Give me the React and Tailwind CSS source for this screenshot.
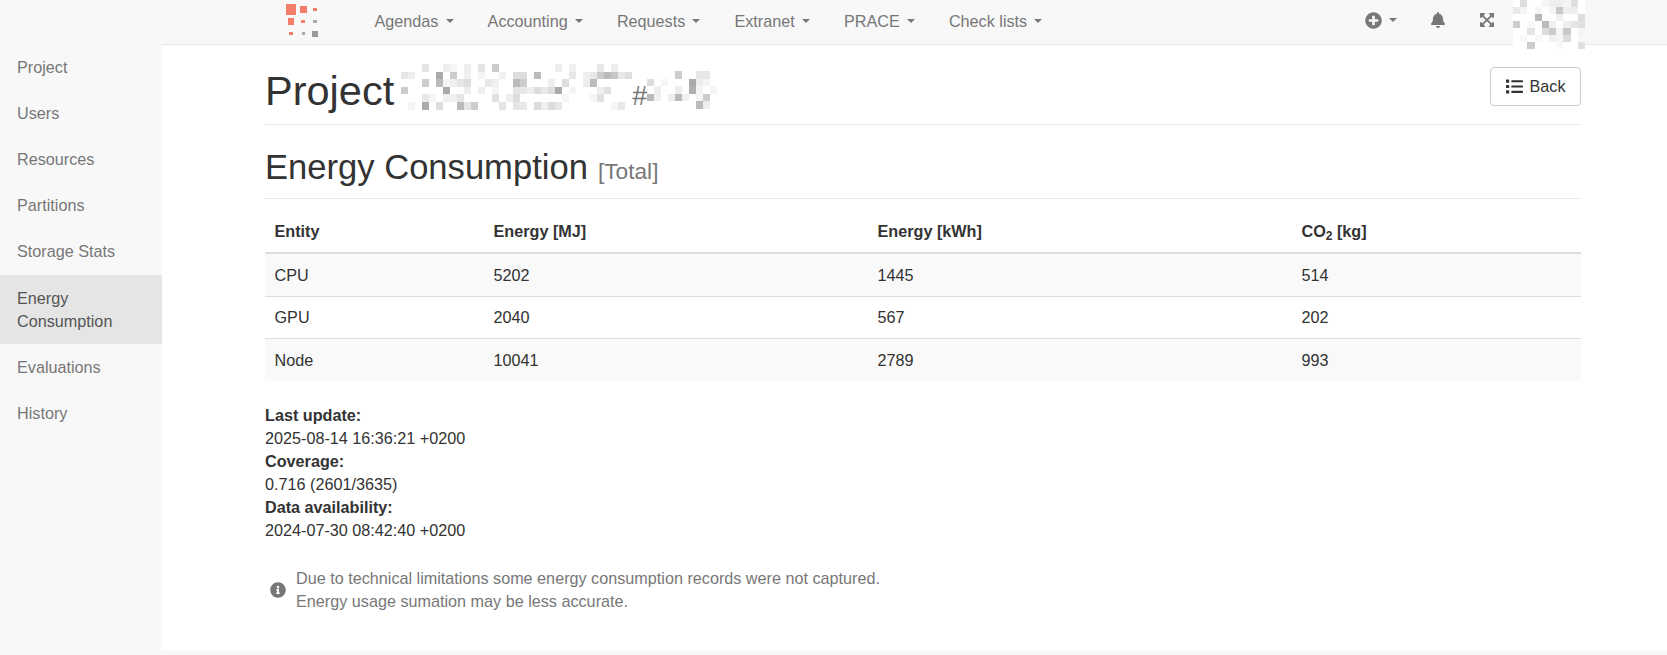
import { FaPlusCircle, FaBell, FaExpandArrowsAlt, FaList, FaInfoCircle } from "react-icons/fa";

const sideItems = ["Project", "Users", "Resources", "Partitions", "Storage Stats", "Energy Consumption", "Evaluations", "History"];
const navItems = ["Agendas", "Accounting", "Requests", "Extranet", "PRACE", "Check lists"];

const rows = [
  ["CPU", "5202", "1445", "514", "h-[43px] pt-px border-b border-[#ddd] bg-[#f9f9f9]"],
  ["GPU", "2040", "567", "202", "h-[42px] border-b border-[#ddd]"],
  ["Node", "10041", "2789", "993", "h-[42px] bg-[#f9f9f9]"],
];

// redacted text, [row, col, gray]
const nameCells = [
  [0,3,"#e5e5e5"],[0,6,"#eee"],[0,7,"#f5f5f5"],[0,9,"#eee"],[0,11,"#e5e5e5"],[0,13,"#ccc"],[0,22,"#eee"],[0,24,"#f0f0f0"],[0,28,"#e8e8e8"],[0,30,"#eee"],
  [1,0,"#e5e5e5"],[1,1,"#eee"],[1,5,"#aaa"],[1,7,"#ccc"],[1,9,"#f0f0f0"],[1,11,"#f5f5f5"],[1,14,"#f0f0f0"],[1,16,"#ddd"],[1,17,"#ddd"],[1,19,"#bbb"],[1,24,"#e8e8e8"],[1,26,"#f0f0f0"],[1,27,"#e8e8e8"],[1,28,"#ccc"],[1,29,"#bbb"],[1,30,"#c8c8c8"],[1,31,"#e8e8e8"],[1,32,"#e0e0e0"],
  [2,3,"#ccc"],[2,5,"#bbb"],[2,6,"#f5f5f5"],[2,7,"#f0f0f0"],[2,8,"#e5e5e5"],[2,9,"#ddd"],[2,12,"#e8e8e8"],[2,13,"#f0f0f0"],[2,16,"#bbb"],[2,17,"#ccc"],[2,21,"#eee"],[2,23,"#ddd"],[2,26,"#eee"],[2,27,"#bbb"],
  [3,0,"#ccc"],[3,6,"#aaa"],[3,9,"#eee"],[3,11,"#eee"],[3,13,"#f5f5f5"],[3,16,"#e5e5e5"],[3,17,"#e8e8e8"],[3,18,"#eee"],[3,19,"#ddd"],[3,20,"#e8e8e8"],[3,21,"#ddd"],[3,22,"#aaa"],[3,24,"#f5f5f5"],[3,28,"#eee"],[3,29,"#e0e0e0"],
  [4,3,"#e8e8e8"],[4,4,"#f5f5f5"],[4,6,"#f0f0f0"],[4,7,"#f0f0f0"],[4,8,"#e5e5e5"],[4,13,"#e0e0e0"],[4,15,"#eee"],[4,16,"#ddd"],[4,23,"#f5f5f5"],[4,27,"#f5f5f5"],[4,28,"#e0e0e0"],
  [5,1,"#f5f5f5"],[5,3,"#aaa"],[5,5,"#ddd"],[5,8,"#bbb"],[5,9,"#e5e5e5"],[5,10,"#ccc"],[5,14,"#e5e5e5"],[5,16,"#e5e5e5"],[5,17,"#e8e8e8"],[5,19,"#ddd"],[5,20,"#f0f0f0"],[5,21,"#ddd"],[5,22,"#e8e8e8"],[5,30,"#f5f5f5"],[5,31,"#e8e8e8"],
];
const idCells = [
  [0,4,"#ccc"],[0,7,"#e8e8e8"],[0,8,"#e8e8e8"],
  [1,0,"#ddd"],[1,2,"#f5f5f5"],[1,6,"#aaa"],[1,7,"#eee"],[1,8,"#f5f5f5"],
  [2,1,"#eee"],[2,4,"#eee"],[2,6,"#b0b0b0"],[2,7,"#f5f5f5"],[2,9,"#f5f5f5"],
  [3,0,"#bbb"],[3,1,"#f0f0f0"],[3,3,"#eee"],[3,4,"#bbb"],[3,5,"#f0f0f0"],[3,7,"#f5f5f5"],[3,8,"#ccc"],
  [4,7,"#bbb"],[4,8,"#eee"],
];
const avatarCells = [
  [0,1,"#ddd"],[0,4,"#f5f5f5"],[0,5,"#eee"],[0,6,"#eee"],[0,7,"#f5f5f5"],[0,8,"#e0e0e0"],
  [1,0,"#e8e8e8"],[1,1,"#f5f5f5"],[1,3,"#f5f5f5"],[1,5,"#f5f5f5"],[1,6,"#c8c8c8"],[1,7,"#eee"],[1,8,"#eee"],
  [2,3,"#b8b8b8"],[2,6,"#f0f0f0"],[2,9,"#ddd"],
  [3,0,"#ccc"],[3,2,"#f8f8f8"],[3,4,"#bbb"],[3,5,"#f0f0f0"],[3,7,"#eee"],[3,8,"#e5e5e5"],[3,9,"#e0e0e0"],
  [4,2,"#e5e5e5"],[4,4,"#ddd"],[4,5,"#ccc"],[4,6,"#f5f5f5"],[4,7,"#c8c8c8"],[4,9,"#f5f5f5"],
  [5,1,"#f8f8f8"],[5,3,"#f8f8f8"],[5,5,"#f0f0f0"],[5,6,"#f5f5f5"],[5,7,"#ddd"],[5,9,"#f8f8f8"],
  [6,2,"#ccc"],[6,6,"#f8f8f8"],[6,9,"#e0e0e0"],
];

function Pixels({ cells, cols, rowCount, cw, ch, className }) {
  return (
    <svg className={className} width={cols * cw} height={rowCount * ch} viewBox={`0 0 ${cols * cw} ${rowCount * ch}`} shapeRendering="crispEdges">
      {cells.map(([r, c, fill]) => (
        <rect key={`${r}-${c}`} x={c * cw} y={r * ch} width={cw} height={ch} fill={fill} />
      ))}
    </svg>
  );
}

function Logo() {
  return (
    <svg className="mt-1 shrink-0" width="33" height="33" viewBox="0 0 33 33" shapeRendering="crispEdges">
      <rect x="0" y="0" width="10" height="11" fill="#f47c6b" />
      <rect x="14" y="2" width="7" height="7" fill="#f47c6b" />
      <rect x="27" y="4" width="4" height="3" fill="#f47c6b" />
      <rect x="2" y="14" width="6" height="7" fill="#f47c6b" />
      <rect x="15" y="16" width="4" height="3" fill="#f47c6b" />
      <rect x="27" y="16" width="4" height="3" fill="#aaa" />
      <rect x="3" y="28" width="4" height="3" fill="#f47c6b" />
      <rect x="16" y="28" width="3" height="3" fill="#aaa" />
      <rect x="26" y="27" width="6" height="6" fill="#999" />
    </svg>
  );
}

function Caret() {
  return <span className="inline-block w-0 h-0 border-x-4 border-t-4 border-x-transparent border-t-[#777]" />;
}

function App() {
  return (
    <div className="h-[655px] overflow-hidden bg-[#f8f8f8] font-['Liberation_Sans',sans-serif] text-[16.2px] leading-[23px] text-[#333]">

      {/* TOP NAV */}
      <div className="h-[44px] flex items-start pl-[286px] pr-[82px] bg-[#f8f8f8] text-[#777]">
        <Logo />
        <div className="flex ml-[38.5px]">
          {navItems.map((item) => (
            <div key={item} className="h-[42px] px-[17px] flex items-center gap-[7.2px]">
              {item}
              <Caret />
            </div>
          ))}
        </div>
        <div className="ml-auto flex items-start relative z-10">
          <div className="h-[40px] flex items-center gap-[7px] text-[#777]">
            <FaPlusCircle className="text-[17px]" />
            <Caret />
          </div>
          <div className="h-[40px] flex items-center ml-[33px]">
            <FaBell className="text-[16px]" />
          </div>
          <div className="h-[40px] flex items-center ml-[33px]">
            <FaExpandArrowsAlt className="text-[16px]" />
          </div>
          <Pixels className="ml-[18px] bg-white" cells={avatarCells} cols={10} rowCount={7} cw={7.2} ch={7} />
        </div>
      </div>

      <div className="flex">

        {/* SIDEBAR */}
        <div className="w-[162px] shrink-0 text-[#777]">
          {sideItems.map((item) => (
            <div
              key={item}
              className={item === "Energy Consumption" ? "px-[17px] py-[11.6px] bg-[#e5e5e5] text-[#555]" : "px-[17px] py-[11.6px]"}
            >
              {item}
            </div>
          ))}
        </div>

        {/* MAIN */}
        <div className="flex-1 h-[606px] bg-white border-t border-[#e7e7e7] pl-[103px] pr-[86px]">

          <div className="h-[80px] flex items-start justify-between border-b border-[#e7e7e7]">
            <div className="flex items-start">
              <h1 className="text-[41.5px] leading-[45px] mt-[23px]">Project</h1>
              <Pixels className="ml-[7px] mt-[19px]" cells={nameCells} cols={33} rowCount={6} cw={7} ch={7.6} />
              <span className="text-[27px] leading-[30px] text-[#777] mt-[36px]">#</span>
              <Pixels className="mt-[26px]" cells={idCells} cols={10} rowCount={5} cw={7} ch={7.6} />
            </div>
            <button className="mt-[22px] w-[91px] h-[39px] flex items-center justify-center gap-[7px] bg-white border border-[#ccc] rounded text-[#333]">
              <FaList className="text-[17px]" />
              Back
            </button>
          </div>

          <div className="h-[74px] flex items-baseline gap-[10px] border-b border-[#e7e7e7] pt-[23px]">
            <h2 className="text-[34.6px] leading-[38px]">Energy Consumption</h2>
            <span className="text-[22.7px] text-[#777]">[Total]</span>
          </div>

          <table className="w-full mt-[12px] table-fixed border-separate border-spacing-0">
            <colgroup>
              <col className="w-[219px]" />
              <col className="w-[384px]" />
              <col className="w-[424px]" />
              <col />
            </colgroup>
            <thead>
              <tr className="text-left">
                <th className="h-[43px] px-[9.5px] border-b-2 border-[#ddd] font-bold">Entity</th>
                <th className="px-[9.5px] border-b-2 border-[#ddd] font-bold">Energy [MJ]</th>
                <th className="px-[9.5px] border-b-2 border-[#ddd] font-bold">Energy [kWh]</th>
                <th className="px-[9.5px] border-b-2 border-[#ddd] font-bold">
                  CO<sub className="text-[12px]">2</sub> [kg]
                </th>
              </tr>
            </thead>
            <tbody>
              {rows.map(([entity, mj, kwh, co2, cls]) => (
                <tr key={entity}>
                  <td className={`px-[9.5px] ${cls}`}>{entity}</td>
                  <td className={`px-[9.5px] ${cls}`}>{mj}</td>
                  <td className={`px-[9.5px] ${cls}`}>{kwh}</td>
                  <td className={`px-[9.5px] ${cls}`}>{co2}</td>
                </tr>
              ))}
            </tbody>
          </table>

          <div className="mt-[23px]">
            <div className="font-bold">Last update:</div>
            <div>2025-08-14 16:36:21 +0200</div>
            <div className="font-bold">Coverage:</div>
            <div>0.716 (2601/3635)</div>
            <div className="font-bold">Data availability:</div>
            <div>2024-07-30 08:42:40 +0200</div>
          </div>

          <div className="mt-[25px] flex items-center text-[#777]">
            <FaInfoCircle className="text-[16px] ml-[5px] mr-[10px]" />
            <div>
              Due to technical limitations some energy consumption records were not captured.
              <br />
              Energy usage sumation may be less accurate.
            </div>
          </div>

        </div>

      </div>

    </div>
  );
}

export default App;
